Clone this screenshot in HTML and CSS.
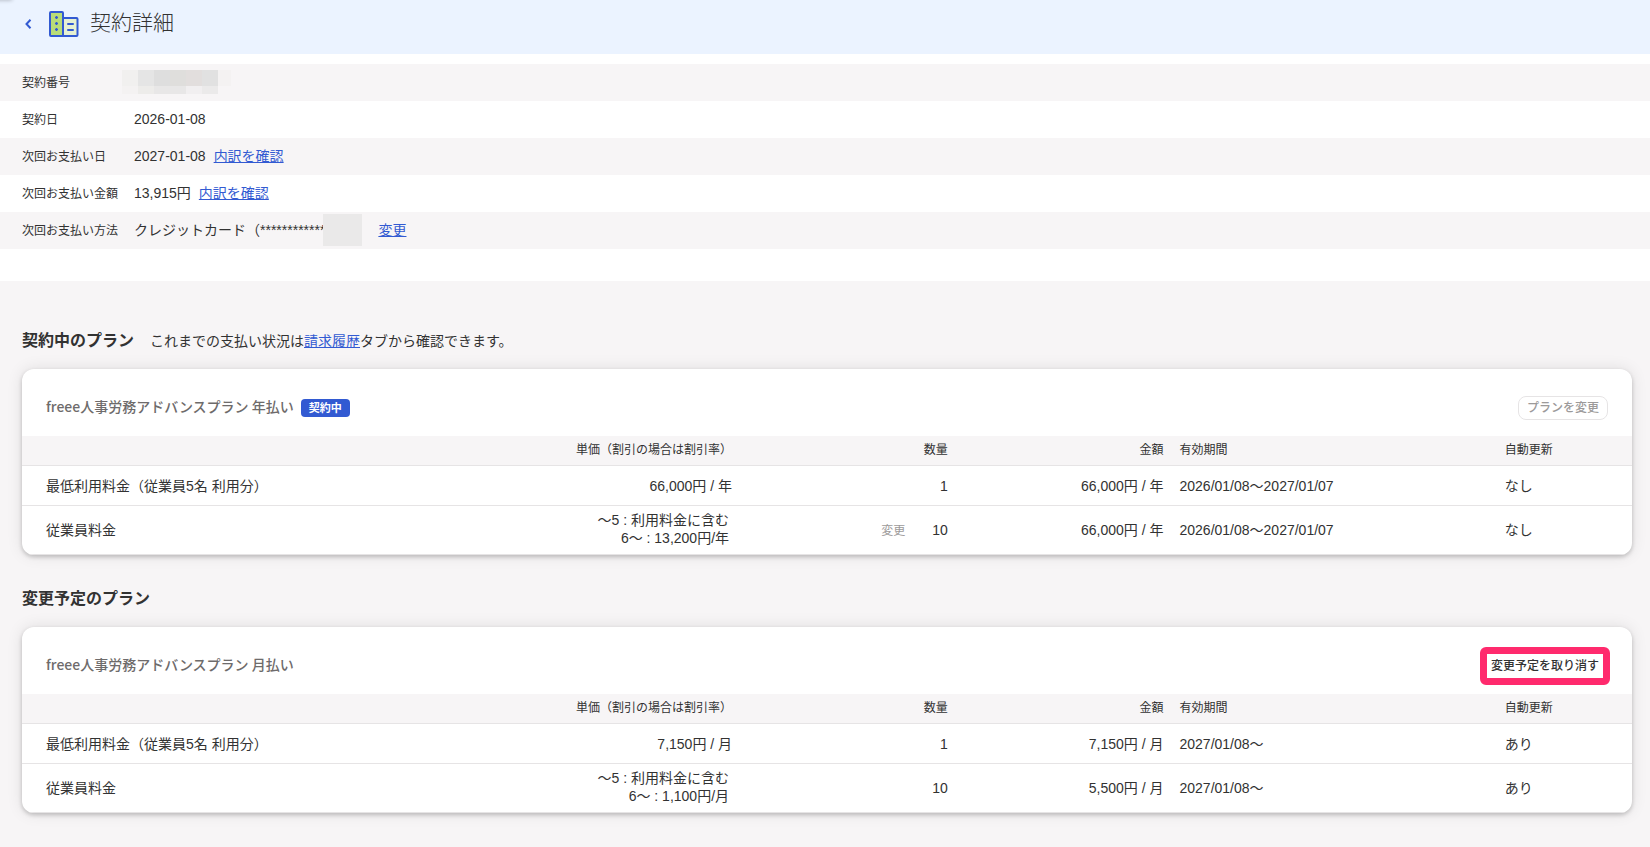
FILE: index.html
```html
<!DOCTYPE html>
<html lang="ja">
<head>
    <meta charset="UTF-8">
    <meta name="viewport" content="width=device-width, initial-scale=1.0">
    <title>契約詳細</title>
    <link rel="stylesheet" href="styles.css">
</head>
<body>
    <header class="page-header">
        <a href="#" class="back-link" aria-label="戻る">
            <svg width="8" height="12" viewBox="0 0 8 12"><path d="M6.500 1.800L2.500 6l4 4.200" fill="none" stroke="currentColor" stroke-width="2"/></svg>
        </a>
        <svg class="page-icon" width="30" height="28" viewBox="0 0 30 28">
            <rect x="1" y="2" width="13" height="24" rx="2" fill="#b9dc78"/>
            <rect x="14" y="8" width="15" height="18" rx="2" fill="#e6f0d2"/>
            <path d="M14 26V3q0-1-1-1H2q-1 0-1 1V25q0 1 1 1h25.500q1 0 1-1V9q0-1-1-1H14" fill="none" stroke="#325ad2" stroke-width="2"/>
            <path d="M7.500 6v3M7.500 12v3M7.500 18v3M6 7.500h3M6 13.500h3M6 19.500h3" stroke="#325ad2" stroke-width="1.300"/>
            <path d="M19 14h5M19 20h5" stroke="#325ad2" stroke-width="2" stroke-linecap="round"/>
        </svg>
        <h1 class="page-title">契約詳細</h1>
    </header>

    <section class="summary">
        <dl class="summary-list">
            <div class="summary-row">
                <dt>契約番号</dt>
                <dd>
                    <svg class="mask-number" width="109" height="24" viewBox="0 0 109 24" shape-rendering="crispEdges">
                        <path fill="#f1f0ef" d="M0 0h16v16H0z"/>
                        <path fill="#f4f2f2" d="M0 16h16v8H0zM96 0h13v16H96z"/>
                        <path fill="#e5e5e5" d="M16 0h16v16H16z"/>
                        <path fill="#dedede" d="M32 0h16v16H32z"/>
                        <path fill="#dfdedc" d="M48 0h16v16H48z"/>
                        <path fill="#e2dedd" d="M64 0h16v16H64z"/>
                        <path fill="#e1e1e1" d="M80 0h16v16H80z"/>
                        <path fill="#edecea" d="M16 16h16v8H16z"/>
                        <path fill="#e8e7e7" d="M32 16h32v8H32z"/>
                        <path fill="#f1eff0" d="M64 16h16v8H64z"/>
                        <path fill="#ebeaea" d="M80 16h16v8H80z"/>
                    </svg>
                </dd>
            </div>
            <div class="summary-row">
                <dt>契約日</dt>
                <dd>2026-01-08</dd>
            </div>
            <div class="summary-row">
                <dt>次回お支払い日</dt>
                <dd>2027-01-08<a href="#" class="link">内訳を確認</a></dd>
            </div>
            <div class="summary-row">
                <dt>次回お支払い金額</dt>
                <dd>13,915円<a href="#" class="link">内訳を確認</a></dd>
            </div>
            <div class="summary-row">
                <dt>次回お支払い方法</dt>
                <dd>クレジットカード（************<span class="mask-card"></span><a href="#" class="link link-change">変更</a></dd>
            </div>
        </dl>
    </section>

    <main class="plans">
        <section class="plan-section">
            <div class="section-head">
                <h2 class="section-title">契約中のプラン</h2>
                <p class="section-note">これまでの支払い状況は<a href="#" class="link-inline">請求履歴</a>タブから確認できます。</p>
            </div>
            <div class="card">
                <div class="card-head">
                    <h3 class="card-title">freee人事労務アドバンスプラン 年払い</h3>
                    <span class="badge">契約中</span>
                    <button type="button" class="btn" disabled>プランを変更</button>
                </div>
                <table class="plan-table">
                    <thead>
                        <tr>
                            <th class="col-name"></th>
                            <th class="col-num">単価（割引の場合は割引率）</th>
                            <th class="col-num">数量</th>
                            <th class="col-num">金額</th>
                            <th class="col-period">有効期間</th>
                            <th class="col-renew">自動更新</th>
                        </tr>
                    </thead>
                    <tbody>
                        <tr>
                            <td class="col-name">最低利用料金（従業員5名 利用分）</td>
                            <td class="col-num">66,000円 / 年</td>
                            <td class="col-num">1</td>
                            <td class="col-num">66,000円 / 年</td>
                            <td>2026/01/08〜2027/01/07</td>
                            <td>なし</td>
                        </tr>
                        <tr class="row-tall">
                            <td class="col-name">従業員料金</td>
                            <td class="col-num tiers">〜5 : 利用料金に含む<br>6〜 : 13,200円/年</td>
                            <td class="col-num"><button type="button" class="btn-text" disabled>変更</button>10</td>
                            <td class="col-num">66,000円 / 年</td>
                            <td>2026/01/08〜2027/01/07</td>
                            <td>なし</td>
                        </tr>
                    </tbody>
                </table>
            </div>
        </section>

        <section class="plan-section">
            <div class="section-head">
                <h2 class="section-title">変更予定のプラン</h2>
            </div>
            <div class="card">
                <div class="card-head">
                    <h3 class="card-title">freee人事労務アドバンスプラン 月払い</h3>
                    <button type="button" class="btn btn-highlight">変更予定を取り消す</button>
                </div>
                <table class="plan-table">
                    <thead>
                        <tr>
                            <th class="col-name"></th>
                            <th class="col-num">単価（割引の場合は割引率）</th>
                            <th class="col-num">数量</th>
                            <th class="col-num">金額</th>
                            <th class="col-period">有効期間</th>
                            <th class="col-renew">自動更新</th>
                        </tr>
                    </thead>
                    <tbody>
                        <tr>
                            <td class="col-name">最低利用料金（従業員5名 利用分）</td>
                            <td class="col-num">7,150円 / 月</td>
                            <td class="col-num">1</td>
                            <td class="col-num">7,150円 / 月</td>
                            <td>2027/01/08〜</td>
                            <td>あり</td>
                        </tr>
                        <tr class="row-tall">
                            <td class="col-name">従業員料金</td>
                            <td class="col-num tiers">〜5 : 利用料金に含む<br>6〜 : 1,100円/月</td>
                            <td class="col-num">10</td>
                            <td class="col-num">5,500円 / 月</td>
                            <td>2027/01/08〜</td>
                            <td>あり</td>
                        </tr>
                    </tbody>
                </table>
            </div>
        </section>
    </main>
</body>
</html>
```
FILE: styles.css
```css
:root {
    --text: #323232;
    --text-muted: #6e6b6b;
    --text-disabled: #9c9a9a;
    --primary: #325ad2;
    --surface: #f7f5f6;
    --border: #e6e4e5;
    --highlight: #ff2a6d;
    --gutter: 22px;
}

* {
    margin: 0;
    padding: 0;
    box-sizing: border-box;
}

body {
    font-family: "Liberation Sans", "Noto Sans CJK JP", sans-serif;
    font-size: 14px;
    line-height: 18px;
    background: var(--surface);
    color: var(--text);
    min-height: 100vh;
}

.page-header {
    position: relative;
    overflow: hidden;
    display: flex;
    align-items: center;
    height: 54px;
    padding: 0 24px 6px;
    background: #ebf3ff;
}

/* shadow of the tab above the header */
.page-header::before {
    content: "";
    position: absolute;
    top: -4px;
    left: -4px;
    width: 16px;
    height: 4px;
    box-shadow: 0 0 4px rgba(0, 0, 0, 0.3);
}

.back-link {
    display: flex;
    color: var(--primary);
    margin-right: 17px;
}

.page-title {
    font-size: 21px;
    line-height: 32px;
    font-weight: 300;
    margin-left: 11px;
    padding-bottom: 2px;
}

.summary {
    background: #ffffff;
    padding: 10px 0 32px;
}

.summary-row {
    display: flex;
    align-items: center;
    height: 37px;
    padding: 0 var(--gutter);
}

.summary-row:nth-child(odd) {
    background: var(--surface);
}

.summary-row dt {
    width: 112px;
    font-size: 12px;
}

.summary-row dd {
    display: flex;
    align-items: center;
    padding-bottom: 2px;
}

.link,
.link-inline {
    color: var(--primary);
    text-decoration: underline;
}

.link {
    margin-left: 8px;
}

.link-change {
    margin-left: 16px;
}

.mask-number {
    display: block;
    margin-left: -12px;
}

.mask-card {
    width: 39px;
    height: 32px;
    margin-left: -2px;
    background: #eae9e9;
}

.plans {
    padding: 46px 18px 34px var(--gutter);
}

.plan-section + .plan-section {
    margin-top: 30px;
}

.section-head {
    display: flex;
    align-items: center;
    height: 28px;
    margin-bottom: 14px;
}

.section-title {
    font-size: 16px;
    font-weight: 700;
}

.section-note {
    margin-left: 16px;
}

.card {
    background: #ffffff;
    border-radius: 12px;
    overflow: hidden;
    box-shadow: 0 0 16px rgba(0, 0, 0, 0.1), 0 2px 4px rgba(0, 0, 0, 0.2);
}

.card-head {
    display: flex;
    align-items: center;
    height: 67px;
    padding: 10px 24px 0;
}

.card-title {
    font-family: "Noto Sans CJK JP", sans-serif;
    font-size: 14px;
    font-weight: 500;
    color: var(--text-muted);
    padding-bottom: 4px;
}

.badge {
    margin-left: 7px;
    padding: 0 8px;
    border-radius: 4px;
    background: var(--primary);
    color: #ffffff;
    font-size: 11px;
    font-weight: 700;
}

.btn {
    position: relative;
    margin-left: auto;
    height: 24px;
    padding: 0 8px 2px;
    border: 1px solid var(--border);
    border-radius: 8px;
    background: #ffffff;
    color: var(--text);
    font-family: inherit;
    font-size: 12px;
    font-weight: 500;
    cursor: pointer;
}

.btn:disabled,
.btn-text:disabled {
    color: var(--text-disabled);
    cursor: default;
}

.btn-highlight {
    border-color: transparent;
}

.btn-highlight::after {
    content: "";
    position: absolute;
    inset: -8px -3px;
    border: 7px solid var(--highlight);
    border-radius: 6px;
}

.btn-text {
    margin-right: 27px;
    border: none;
    background: none;
    font-family: inherit;
    font-size: 12px;
}

.plan-table {
    width: 100%;
    table-layout: fixed;
    border-collapse: separate;
    border-spacing: 0;
}

.plan-table th {
    height: 30px;
    padding: 0 8px 2px;
    background: var(--surface);
    border-bottom: 1px solid var(--border);
    font-size: 12px;
    font-weight: 400;
    text-align: left;
    white-space: nowrap;
}

.plan-table td {
    height: 40px;
    padding: 0 8px;
    border-bottom: 1px solid var(--border);
}

.plan-table .row-tall td {
    height: 49px;
}

.plan-table .col-name {
    width: 31.2%;
    padding-left: 24px;
}

.plan-table .col-num {
    width: 13.4%;
    text-align: right;
}

.plan-table .tiers {
    padding-right: 11px;
    padding-bottom: 2px;
}

.plan-table .col-period {
    width: 20.2%;
}

.plan-table .col-renew {
    width: 8.4%;
}
```
